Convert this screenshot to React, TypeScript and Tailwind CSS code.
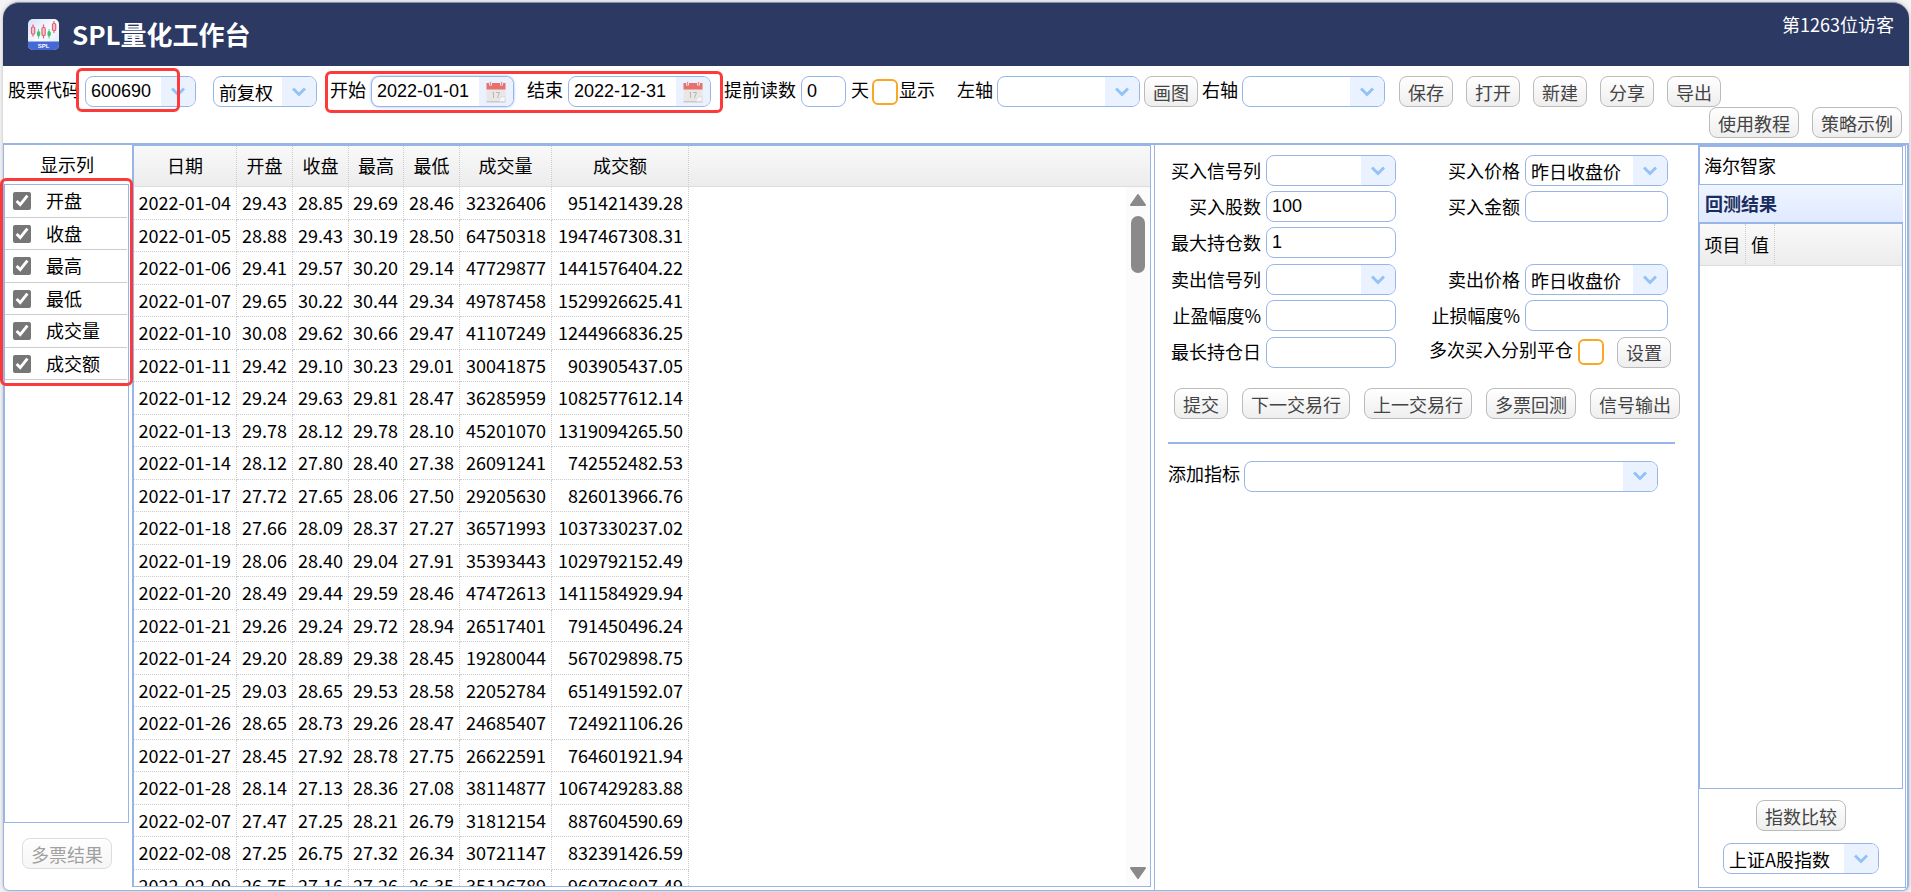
import type { ReactNode } from 'react';

const rows = [
  ['2022-01-04', '29.43', '28.85', '29.69', '28.46', '32326406', '951421439.28'],
  ['2022-01-05', '28.88', '29.43', '30.19', '28.50', '64750318', '1947467308.31'],
  ['2022-01-06', '29.41', '29.57', '30.20', '29.14', '47729877', '1441576404.22'],
  ['2022-01-07', '29.65', '30.22', '30.44', '29.34', '49787458', '1529926625.41'],
  ['2022-01-10', '30.08', '29.62', '30.66', '29.47', '41107249', '1244966836.25'],
  ['2022-01-11', '29.42', '29.10', '30.23', '29.01', '30041875', '903905437.05'],
  ['2022-01-12', '29.24', '29.63', '29.81', '28.47', '36285959', '1082577612.14'],
  ['2022-01-13', '29.78', '28.12', '29.78', '28.10', '45201070', '1319094265.50'],
  ['2022-01-14', '28.12', '27.80', '28.40', '27.38', '26091241', '742552482.53'],
  ['2022-01-17', '27.72', '27.65', '28.06', '27.50', '29205630', '826013966.76'],
  ['2022-01-18', '27.66', '28.09', '28.37', '27.27', '36571993', '1037330237.02'],
  ['2022-01-19', '28.06', '28.40', '29.04', '27.91', '35393443', '1029792152.49'],
  ['2022-01-20', '28.49', '29.44', '29.59', '28.46', '47472613', '1411584929.94'],
  ['2022-01-21', '29.26', '29.24', '29.72', '28.94', '26517401', '791450496.24'],
  ['2022-01-24', '29.20', '28.89', '29.38', '28.45', '19280044', '567029898.75'],
  ['2022-01-25', '29.03', '28.65', '29.53', '28.58', '22052784', '651491592.07'],
  ['2022-01-26', '28.65', '28.73', '29.26', '28.47', '24685407', '724921106.26'],
  ['2022-01-27', '28.45', '27.92', '28.78', '27.75', '26622591', '764601921.94'],
  ['2022-01-28', '28.14', '27.13', '28.36', '27.08', '38114877', '1067429283.88'],
  ['2022-02-07', '27.47', '27.25', '28.21', '26.79', '31812154', '887604590.69'],
  ['2022-02-08', '27.25', '26.75', '27.32', '26.34', '30721147', '832391426.59'],
  ['2022-02-09', '26.75', '27.16', '27.26', '26.35', '35126789', '960796807.49'],
];

const headers = ['日期', '开盘', '收盘', '最高', '最低', '成交量', '成交额'];

const box = 'flex h-[31px] shrink-0 overflow-hidden rounded-lg border border-[#99b5e8] bg-white';
const field = 'min-w-0 flex-1 bg-transparent pl-[5px] text-black outline-none';
const number = "pb-0.5 font-['Liberation_Sans',Arial,sans-serif]";
const formLabel = 'pb-0.5 text-right';

function Btn({ children, disabled }: { children: ReactNode; disabled?: boolean }) {
  return (
    <button
      type="button"
      disabled={disabled}
      className="h-[31px] shrink-0 rounded-lg border border-[#bbb] bg-linear-to-b from-white to-[#eee] px-2 leading-[26px] whitespace-nowrap text-[#444] disabled:opacity-50"
    >
      {children}
    </button>
  );
}

function Arrow() {
  return (
    <span className="flex w-[34px] shrink-0 items-center justify-center bg-[#ebf2ff]">
      <svg width="14" height="10" viewBox="0 0 14 10" fill="none" stroke="#93c3f6" strokeWidth="3">
        <path d="M1 1.5 7 7.5 13 1.5" />
      </svg>
    </span>
  );
}

function Picker({ id, value, width, label }: { id: string; value?: string; width: string; label?: string }) {
  return (
    <span className={`${box} ${width}`}>
      <select id={id} aria-label={label} className={`${field} appearance-none`}>
        <option>{value ?? ''}</option>
      </select>
      <Arrow />
    </span>
  );
}

function TextBox({ id, value, width }: { id: string; value?: string; width: string }) {
  return (
    <span className={`${box} ${width}`}>
      <input id={id} type="text" defaultValue={value} className={`${field} ${number}`} />
    </span>
  );
}

function CalendarIcon() {
  return (
    <svg width="20" height="22" viewBox="0 0 20 22">
      <rect x="0.5" y="2" width="19" height="19" rx="1" fill="#e9e7e6" />
      <rect x="0.5" y="20" width="19" height="1.5" fill="#c9c7c7" />
      <path d="M0.5 2h19v6.5h-19z" fill="#e8706f" />
      <path d="M3 0.5h3v4h-3zM14 0.5h3v4h-3z" fill="#f6dedd" />
      <path d="M4.5 1v3M15.500 1v3" stroke="#b9a3a5" />
      <path d="M6.500 12 7.500 11v6M10 11.500h3.500L11.500 17" fill="none" stroke="#bbb6b6" />
      <path d="M13 20.500c0-3 2-5 6-5v5z" fill="#f8f7f7" stroke="#d5d2d2" strokeWidth="0.7" />
    </svg>
  );
}

function DateBox({ id, value, active }: { id: string; value: string; active?: boolean }) {
  return (
    <span className={`${box} w-[143px] ${active ? 'border-[#6b94dd] shadow-[0_0_3px_#9dbcf0]' : ''}`}>
      <input id={id} type="text" defaultValue={value} className={`${field} ${number}`} />
      <button type="button" aria-label="选择日期" className="flex w-[34px] shrink-0 items-center justify-center bg-[#ebf2ff]">
        <CalendarIcon />
      </button>
    </span>
  );
}

function Label({ htmlFor, children }: { htmlFor: string; children: ReactNode }) {
  return (
    <label htmlFor={htmlFor} className="shrink-0 pb-1.5 whitespace-nowrap">
      {children}
    </label>
  );
}

function OrangeCheck({ id }: { id: string }) {
  return (
    <input
      id={id}
      type="checkbox"
      className="size-[26px] shrink-0 appearance-none rounded-md border-2 border-[#f9a825] bg-white"
    />
  );
}

function Logo() {
  return (
    <svg width="31" height="31" viewBox="0 0 31 31">
      <defs>
        <clipPath id="logo-clip">
          <rect width="31" height="31" rx="5" />
        </clipPath>
        <linearGradient id="logo-bg" x1="0" y1="0" x2="1" y2="1">
          <stop offset="0" stopColor="#d5e1f8" />
          <stop offset="0.5" stopColor="#fafbff" />
          <stop offset="1" stopColor="#dfe9fb" />
        </linearGradient>
      </defs>
      <g clipPath="url(#logo-clip)">
        <rect width="31" height="31" fill="url(#logo-bg)" />
        <rect y="22.500" width="31" height="9" fill="#4468d6" />
      </g>
      <g fill="#f3c9d2" stroke="#e0647a" strokeWidth="1.200">
        <path d="M5 5.500v12M15.500 5.500v14M26 2v12" />
        <rect x="3.500" y="8" width="3.200" height="7" rx="1" />
        <rect x="14" y="8.500" width="3.200" height="8" rx="1" />
        <rect x="24.500" y="4.500" width="3.200" height="7" rx="1" />
      </g>
      <g fill="#3cc46a" stroke="#3cc46a">
        <path d="M10.500 10v9.500M21 10v9.500" strokeWidth="0.800" />
        <rect x="9.500" y="12.500" width="2.200" height="4.500" rx="1" />
        <rect x="20" y="12.500" width="2.200" height="4.500" rx="1" />
      </g>
      <text x="15.500" y="29" textAnchor="middle" fontSize="6" fontWeight="bold" fill="#fff" fontFamily="Liberation Sans">
        SPL
      </text>
    </svg>
  );
}

export default function App() {
  return (
    <div className="h-screen overflow-hidden bg-[#f4f4f4] pt-0.5 pr-0.5 pb-px pl-[3px] font-['Noto_Sans_CJK_SC',sans-serif] text-[18px] leading-[26px] text-black">
      <div className="flex h-full flex-col rounded-2xl rounded-b-md bg-white shadow-[0_0_4px_#bbb]">
        <header className="flex h-16 shrink-0 items-center rounded-t-2xl border-t border-[#8a91a8] bg-[#2b3963] pr-[15px] pl-[25px] text-white">
          <Logo />
          <h1 className="flex-1 pb-0.5 pl-[13px] text-[26px] leading-[38px] font-bold">SPL量化工作台</h1>
          <span className="self-start pt-2">第1263位访客</span>
        </header>

        {/* toolbar */}
        <div className="shrink-0 pt-2.5 pb-[5px]">
          <div className="flex h-[31px] items-center gap-[13px] pl-[5px]">
            <div className="relative flex h-[31px] items-center gap-[5px]">
              <Label htmlFor="code">股票代码</Label>
              <span className={`${box} w-[111px]`}>
                <input id="code" type="text" defaultValue="600690" className={`${field} ${number}`} />
                <Arrow />
              </span>
              <div className="pointer-events-none absolute -top-2 left-[68px] h-[44px] w-[104px] rounded-md border-3 border-[#fc3a3a]" />
            </div>
            <div className="ml-1 flex">
              <Picker id="adjust" label="复权方式" value="前复权" width="w-[104px]" />
            </div>
            <div className="relative flex h-[31px] items-center gap-[13px]">
              <div className="flex items-center gap-[5px]">
                <Label htmlFor="start">开始</Label>
                <DateBox id="start" value="2022-01-01" active />
              </div>
              <div className="flex items-center gap-[5px]">
                <Label htmlFor="end">结束</Label>
                <DateBox id="end" value="2022-12-31" />
              </div>
              <div className="pointer-events-none absolute -top-[5px] -right-3 -bottom-1.5 -left-[5px] rounded-md border-3 border-[#fc3a3a]" />
            </div>
            <div className="flex items-center gap-[5px]">
              <Label htmlFor="ahead">提前读数</Label>
              <TextBox id="ahead" value="0" width="w-[45px]" />
              <Label htmlFor="ahead">天</Label>
              <div className="-ml-0.5 flex items-center gap-px">
                <OrangeCheck id="show" />
                <Label htmlFor="show">显示</Label>
              </div>
            </div>
            <div className="ml-[9px] flex items-center gap-1">
              <Label htmlFor="left-axis">左轴</Label>
              <Picker id="left-axis" width="w-[143px]" />
              <Btn>画图</Btn>
              <Label htmlFor="right-axis">右轴</Label>
              <Picker id="right-axis" width="w-[143px]" />
            </div>
            <div className="ml-px flex gap-[13px]">
              <Btn>保存</Btn>
              <Btn>打开</Btn>
              <Btn>新建</Btn>
              <Btn>分享</Btn>
              <Btn>导出</Btn>
            </div>
          </div>
          <div className="flex justify-end gap-[13px] pr-[7px]">
            <Btn>使用教程</Btn>
            <Btn>策略示例</Btn>
          </div>
        </div>

        <main className="flex min-h-0 flex-1 rounded-b-md border border-t-2 border-r-2 border-[#99b5e8]">
          {/* visible columns */}
          <aside className="flex w-32 shrink-0 flex-col">
            <h2 className="h-[39px] shrink-0 pt-1.5 pr-0.5 text-center">显示列</h2>
            <div className="relative mr-[3px] flex-1 border border-[#99b5e8]">
              {headers.slice(1).map((name) => (
                <label key={name} className="mr-px flex h-[33px] items-center border-b border-[#ccc] pl-2 even:h-8">
                  <input type="checkbox" defaultChecked className="mr-[15px] size-[18px] accent-[#767676]" />
                  <span className="pb-0.5">{name}</span>
                </label>
              ))}
              <div className="pointer-events-none absolute -top-[7px] -left-[5px] z-10 h-[208px] w-[133px] rounded-md border-3 border-[#fc3a3a]" />
            </div>
            <div className="flex h-[67px] shrink-0 items-start justify-center pt-[15px] pr-0.5">
              <Btn disabled>多票结果</Btn>
            </div>
          </aside>

          {/* quotes */}
          <section className="relative mr-[3px] mb-[3px] min-w-0 flex-1 overflow-hidden border border-l-2 border-[#99b5e8]">
            <table className="w-full table-fixed border-separate border-spacing-0">
              <colgroup>
                <col className="w-[103px]" />
                <col className="w-[56px]" />
                <col className="w-[56px]" />
                <col className="w-[55px]" />
                <col className="w-[56px]" />
                <col className="w-[92px]" />
                <col className="w-[137px]" />
                <col />
              </colgroup>
              <thead>
                <tr className="h-[41px] bg-linear-to-b from-[#f9f9f9] to-[#ececec]">
                  {headers.map((h) => (
                    <th key={h} className="border-r border-b border-[#ccc] border-b-[#ddd] p-0 pb-0.5 font-normal [border-right-style:dotted]">
                      {h}
                    </th>
                  ))}
                  <th className="border-b border-[#ddd] p-0" />
                </tr>
              </thead>
              <tbody>
                {rows.map((row) => (
                  <tr key={row[0]} className="h-[33px] even:h-8">
                    {row.map((cell, i) => (
                      <td key={i} className="border-r border-b border-dotted border-[#ccc] pt-0 pr-[5px] pb-0.5 pl-0 text-right">
                        {cell}
                      </td>
                    ))}
                    <td className="p-0" />
                  </tr>
                ))}
              </tbody>
            </table>
            {/* scrollbar */}
            <div className="absolute top-[41px] right-0 bottom-0 flex w-6 flex-col items-center bg-[#fbfbfb] pt-[7px] pb-[7px]">
              <svg width="16" height="12" viewBox="0 0 16 12" fill="#8a8a8a" stroke="#8a8a8a" strokeWidth="2" strokeLinejoin="round">
                <path d="M8 1 15 11H1z" />
              </svg>
              <div className="mt-2.5 h-[57px] w-3.5 rounded-full bg-[#8a8a8a]" />
              <svg className="mt-auto" width="16" height="12" viewBox="0 0 16 12" fill="#8a8a8a" stroke="#8a8a8a" strokeWidth="2" strokeLinejoin="round">
                <path d="M8 11 1 1h14z" />
              </svg>
            </div>
          </section>

          {/* backtest settings */}
          <section className="w-[544px] shrink-0 border-l border-[#99b5e8] pt-2.5 pl-[13px]">
            <div className="grid grid-cols-[93px_130px_119px_146px] items-center gap-[5px]">
              <label htmlFor="buy-signal" className={formLabel}>买入信号列</label>
              <Picker id="buy-signal" width="w-[130px]" />
              <label htmlFor="buy-price" className={formLabel}>买入价格</label>
              <Picker id="buy-price" value="昨日收盘价" width="w-[143px]" />

              <label htmlFor="buy-count" className={formLabel}>买入股数</label>
              <TextBox id="buy-count" value="100" width="w-[130px]" />
              <label htmlFor="buy-amount" className={formLabel}>买入金额</label>
              <TextBox id="buy-amount" width="w-[143px]" />

              <label htmlFor="max-hold" className={formLabel}>最大持仓数</label>
              <TextBox id="max-hold" value="1" width="w-[130px]" />
            </div>
            <div className="mt-1.5 grid grid-cols-[93px_130px_119px_146px] items-center gap-[5px]">
              <label htmlFor="sell-signal" className={formLabel}>卖出信号列</label>
              <Picker id="sell-signal" width="w-[130px]" />
              <label htmlFor="sell-price" className={formLabel}>卖出价格</label>
              <Picker id="sell-price" value="昨日收盘价" width="w-[143px]" />

              <label htmlFor="take-profit" className={formLabel}>止盈幅度%</label>
              <TextBox id="take-profit" width="w-[130px]" />
              <label htmlFor="stop-loss" className={formLabel}>止损幅度%</label>
              <TextBox id="stop-loss" width="w-[143px]" />

              <label htmlFor="max-days" className={formLabel}>最长持仓日</label>
              <TextBox id="max-days" width="w-[130px]" />
              <div className="col-span-2 flex items-center justify-end gap-[5px]">
                <Label htmlFor="split-close">多次买入分别平仓</Label>
                <OrangeCheck id="split-close" />
                <div className="ml-2 flex">
                  <Btn>设置</Btn>
                </div>
              </div>
            </div>
            <div className="mt-5 flex gap-3.5 pl-1.5">
              <Btn>提交</Btn>
              <Btn>下一交易行</Btn>
              <Btn>上一交易行</Btn>
              <Btn>多票回测</Btn>
              <Btn>信号输出</Btn>
            </div>
            <hr className="mt-[23px] mr-[23px] border-t-2 border-[#99b5e8]" />
            <div className="mt-4 flex items-center gap-1">
              <Label htmlFor="indicator">添加指标</Label>
              <Picker id="indicator" width="w-[414px]" />
            </div>
          </section>

          {/* results */}
          <aside className="mr-px mb-0.5 flex w-52 shrink-0 flex-col border border-[#99b5e8] pr-0.5">
            <div className="h-[39px] shrink-0 border border-[#99b5e8] pt-[5px] pl-1">海尔智家</div>
            <h2 className="h-[38px] shrink-0 border-b border-[#99b5e8] bg-linear-to-b from-[#eff5ff] to-[#e0eaff] pt-[5px] pl-1.5 font-bold text-[#1b2d5f]">
              回测结果
            </h2>
            <div className="min-h-0 flex-1 border border-[#99b5e8]">
              <table className="w-full table-fixed border-separate border-spacing-0">
                <thead>
                  <tr className="h-[42px] bg-linear-to-b from-[#f9f9f9] to-[#ececec]">
                    <th className="w-[46px] border-r border-b border-[#ccc] border-b-[#ddd] p-0 pb-0.5 font-normal [border-right-style:dotted]">项目</th>
                    <th className="w-[29px] border-r border-b border-[#ccc] border-b-[#ddd] p-0 pb-0.5 font-normal [border-right-style:dotted]">值</th>
                    <th className="border-b border-[#ddd] p-0" />
                  </tr>
                </thead>
              </table>
            </div>
            <div className="flex shrink-0 flex-col items-center gap-3 pt-[11px] pb-[13px]">
              <Btn>指数比较</Btn>
              <Picker id="index" label="指数" value="上证A股指数" width="w-[156px]" />
            </div>
          </aside>
        </main>
      </div>
    </div>
  );
}
